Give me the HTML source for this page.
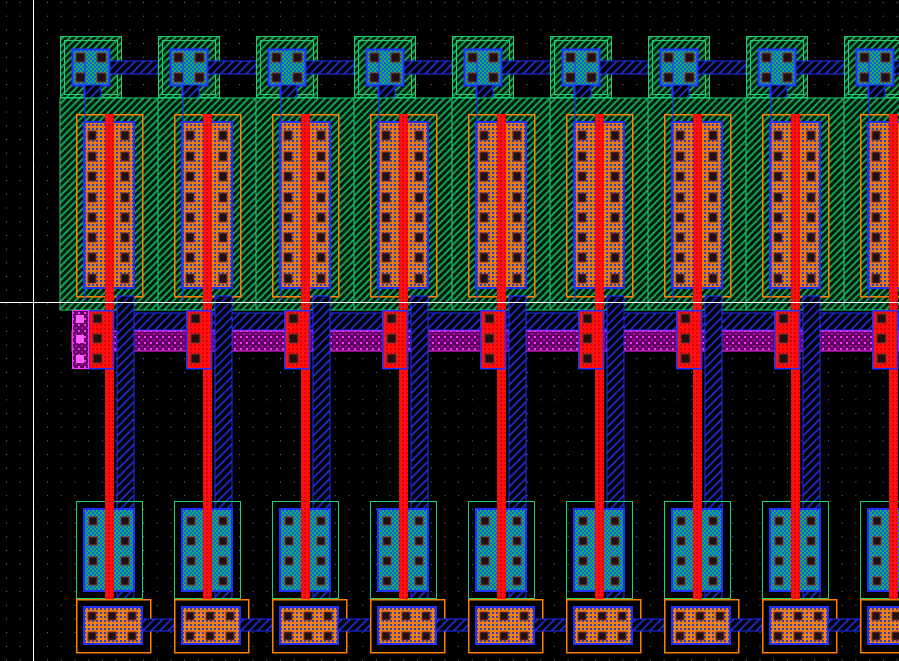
<!DOCTYPE html>
<html><head><style>html,body{margin:0;padding:0;background:#000;overflow:hidden}svg{display:block}</style></head><body>
<svg width="899" height="661" xmlns="http://www.w3.org/2000/svg" shape-rendering="crispEdges">
<defs>
<pattern id="dots" width="13.7" height="13.7" patternUnits="userSpaceOnUse" x="6" y="2"><rect width="1" height="1" fill="#7a7a98"/></pattern>
<pattern id="gh" width="5" height="5" patternUnits="userSpaceOnUse" patternTransform="rotate(45)"><rect width="5" height="5" fill="#021a0c"/><rect width="2.2" height="5" fill="#12a055"/></pattern>
<pattern id="bh" width="6" height="6" patternUnits="userSpaceOnUse" patternTransform="rotate(45)"><rect width="6" height="6" fill="#000"/><rect width="1.8" height="6" fill="#1a28b8"/></pattern>
<pattern id="oc" width="4" height="4" patternUnits="userSpaceOnUse"><rect width="4" height="4" fill="#e87810"/><rect width="2" height="2" fill="#2040d0"/></pattern>
<pattern id="oc2" width="4" height="4" patternUnits="userSpaceOnUse"><rect width="4" height="4" fill="#f08010"/><rect width="2" height="2" fill="#3040c0"/></pattern>
<pattern id="gc" width="4" height="4" patternUnits="userSpaceOnUse"><rect width="4" height="4" fill="#18b058"/><rect width="2" height="2" fill="#1060e0"/><rect x="2" y="2" width="2" height="2" fill="#1060e0"/></pattern>
<pattern id="rc" width="4" height="4" patternUnits="userSpaceOnUse"><rect width="4" height="4" fill="#ff1010"/><rect width="2" height="2" fill="#e00000"/></pattern>
<pattern id="mc" width="6" height="6" patternUnits="userSpaceOnUse"><rect width="6" height="6" fill="#600060"/><rect width="2" height="2" fill="#ff30ff"/><rect x="3" y="3" width="2" height="2" fill="#c000c0"/></pattern>
<g id="col">
 <rect x="60.5" y="36.5" width="61" height="61" fill="url(#gh)" stroke="#20d070"/>
 <rect x="64.5" y="40.5" width="53" height="54" fill="none" stroke="#20d070"/>
 <rect x="72.5" y="49.5" width="37" height="36" fill="url(#gc)" stroke="#2030ff" stroke-width="2"/>
 <rect x="76" y="53" width="9" height="9" fill="#201010" stroke="#803030"/>
 <rect x="97" y="53" width="9" height="9" fill="#201010" stroke="#803030"/>
 <rect x="76" y="73" width="9" height="9" fill="#201010" stroke="#803030"/>
 <rect x="97" y="73" width="9" height="9" fill="#201010" stroke="#803030"/>
 <rect x="110" y="61" width="48" height="13" fill="url(#bh)" stroke="#2030ff"/>
 <rect x="84" y="85" width="17" height="37" fill="url(#bh)" stroke="#2030ff"/>
 <rect x="60" y="98" width="98" height="212" fill="url(#gh)" stroke="#20d070"/>
 <rect x="76.5" y="114.5" width="66" height="182" fill="none" stroke="#ff8000" stroke-width="1.5"/>
 <rect x="84" y="122" width="50" height="166" fill="url(#oc)" stroke="#2030ff" stroke-width="2"/>
 <g fill="#201010" stroke="#803030">
  <rect x="88" y="131" width="8" height="9"/><rect x="121" y="131" width="8" height="9"/>
  <rect x="88" y="152" width="8" height="9"/><rect x="121" y="152" width="8" height="9"/>
  <rect x="88" y="172" width="8" height="9"/><rect x="121" y="172" width="8" height="9"/>
  <rect x="88" y="193" width="8" height="9"/><rect x="121" y="193" width="8" height="9"/>
  <rect x="88" y="213" width="8" height="9"/><rect x="121" y="213" width="8" height="9"/>
  <rect x="88" y="233" width="8" height="9"/><rect x="121" y="233" width="8" height="9"/>
  <rect x="88" y="253" width="8" height="9"/><rect x="121" y="253" width="8" height="9"/>
  <rect x="88" y="274" width="8" height="9"/><rect x="121" y="274" width="8" height="9"/>
 </g>
 <rect x="117" y="296" width="17" height="304" fill="url(#bh)" stroke="#2030ff"/>
 <line x1="85" y1="60" x2="85" y2="300" stroke="#2030ff"/>
 <rect x="105" y="114" width="9" height="486" fill="url(#rc)"/>
 <rect x="88.5" y="310.5" width="25" height="58" fill="url(#rc)" stroke="#2030ff" stroke-width="1.5"/>
 <rect x="93" y="314" width="9" height="9" fill="#201010" stroke="#803030"/>
 <rect x="93" y="334" width="9" height="9" fill="#201010" stroke="#803030"/>
 <rect x="93" y="354" width="9" height="9" fill="#201010" stroke="#803030"/>
 <rect x="76.5" y="501.5" width="66" height="97" fill="none" stroke="#20d070"/>
 <rect x="84" y="509" width="50" height="82" fill="url(#gc)" stroke="#2030ff" stroke-width="2"/>
 <g fill="#201010" stroke="#803030">
  <rect x="89" y="517" width="8" height="8"/><rect x="121" y="517" width="8" height="8"/>
  <rect x="89" y="537" width="8" height="8"/><rect x="121" y="537" width="8" height="8"/>
  <rect x="89" y="557" width="8" height="8"/><rect x="121" y="557" width="8" height="8"/>
  <rect x="89" y="577" width="8" height="8"/><rect x="121" y="577" width="8" height="8"/>
 </g>
 <rect x="105" y="500" width="9" height="100" fill="url(#rc)"/>
 <rect x="76.5" y="599.5" width="74" height="53" fill="#000" stroke="#ff8000" stroke-width="1.5"/>
 <rect x="84" y="607" width="58" height="37" fill="url(#oc2)" stroke="#2030ff" stroke-width="2"/>
 <rect x="142" y="619" width="32" height="12" fill="url(#bh)" stroke="#2030ff"/>
 <g fill="#201010" stroke="#803030">
  <rect x="88" y="612" width="8" height="8"/><rect x="108" y="612" width="8" height="8"/><rect x="128" y="612" width="8" height="8"/>
  <rect x="88" y="632" width="8" height="8"/><rect x="108" y="632" width="8" height="8"/><rect x="128" y="632" width="8" height="8"/>
 </g>
</g>
</defs>
<rect width="899" height="661" fill="#000"/>
<rect width="899" height="661" fill="url(#dots)"/>
<rect x="117" y="313" width="782" height="17" fill="url(#bh)" stroke="#2030ff"/>
<rect x="72" y="331" width="827" height="20" fill="url(#mc)" stroke="#ff30ff"/>
<use href="#col"/>
<use href="#col" x="98"/>
<use href="#col" x="196"/>
<use href="#col" x="294"/>
<use href="#col" x="392"/>
<use href="#col" x="490"/>
<use href="#col" x="588"/>
<use href="#col" x="686"/>
<use href="#col" x="784"/>
<rect x="72.5" y="310.5" width="16" height="58" fill="url(#mc)" stroke="#ff30ff"/>
<rect x="76" y="315" width="8" height="8" fill="#ff60ff"/>
<rect x="76" y="335" width="8" height="8" fill="#ff60ff"/>
<rect x="76" y="355" width="8" height="8" fill="#ff60ff"/>
<line x1="33.5" y1="0" x2="33.5" y2="661" stroke="#fff"/>
<line x1="0" y1="302.5" x2="899" y2="302.5" stroke="#fff"/>
</svg>
</body></html>
